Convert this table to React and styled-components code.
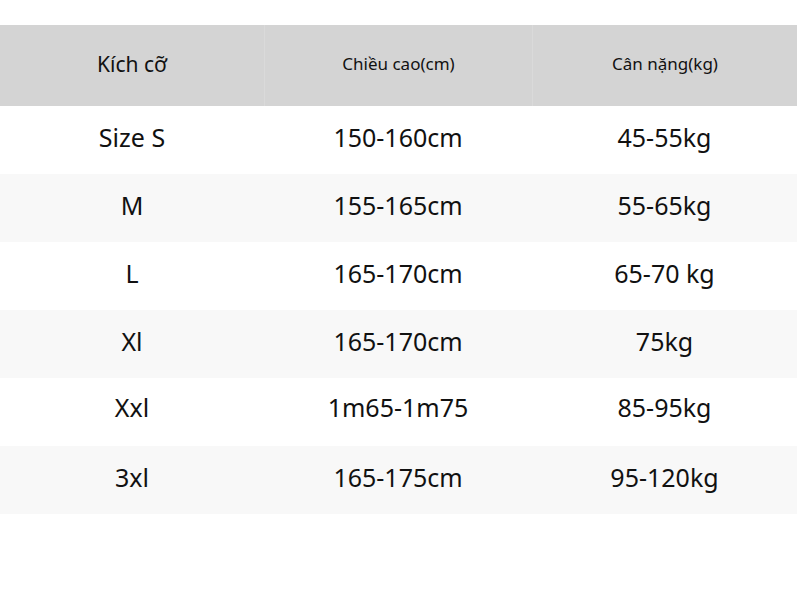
import React from "react";
import styled, { createGlobalStyle } from "styled-components";

const rows = [
  { size: "Size S", height: "150-160cm", weight: "45-55kg" },
  { size: "M", height: "155-165cm", weight: "55-65kg" },
  { size: "L", height: "165-170cm", weight: "65-70 kg" },
  { size: "Xl", height: "165-170cm", weight: "75kg" },
  { size: "Xxl", height: "1m65-1m75", weight: "85-95kg", $lift: true },
  { size: "3xl", height: "165-175cm", weight: "95-120kg" },
];

const GlobalStyle = createGlobalStyle`
  html, body {
    margin: 0;
    padding: 0;
    background: #fff;
  }
  body {
    font-family: "Noto Sans", "Open Sans", sans-serif;
    color: #111;
  }
`;

const SPage = styled.div`
  width: 800px;
  height: 608px;
  padding-top: 25px;
  box-sizing: border-box;
`;

const STable = styled.div`
  width: 797px;
  display: grid;
  grid-template-columns: 264px 268px 1fr;
`;

const SHead = styled.div`
  height: 81px;
  box-sizing: border-box;
  padding-bottom: 4px;
  display: flex;
  align-items: center;
  justify-content: center;
  background: #d4d4d4;
  font-size: ${(p) => (p.$big ? "21px" : "17px")};
  border-left: ${(p) => (p.$first ? "none" : "1px solid #dadada")};
`;

const SCell = styled.div`
  height: 68px;
  box-sizing: border-box;
  padding-bottom: ${(p) => (p.$lift ? "10px" : "6px")};
  display: flex;
  align-items: center;
  justify-content: center;
  font-size: 25px;
  background: ${(p) => (p.$stripe ? "#f8f8f8" : "#fff")};
`;

export default function App() {
  return (
    <SPage>
      <GlobalStyle />
      <STable>
        <SHead $first $big>
          Kích cỡ
        </SHead>
        <SHead>Chiều cao(cm)</SHead>
        <SHead>Cân nặng(kg)</SHead>
        {rows.map((r, i) => (
          <React.Fragment key={r.size}>
            <SCell $stripe={i % 2 === 1} $lift={r.$lift}>{r.size}</SCell>
            <SCell $stripe={i % 2 === 1} $lift={r.$lift}>{r.height}</SCell>
            <SCell $stripe={i % 2 === 1} $lift={r.$lift}>{r.weight}</SCell>
          </React.Fragment>
        ))}
      </STable>
    </SPage>
  );
}
